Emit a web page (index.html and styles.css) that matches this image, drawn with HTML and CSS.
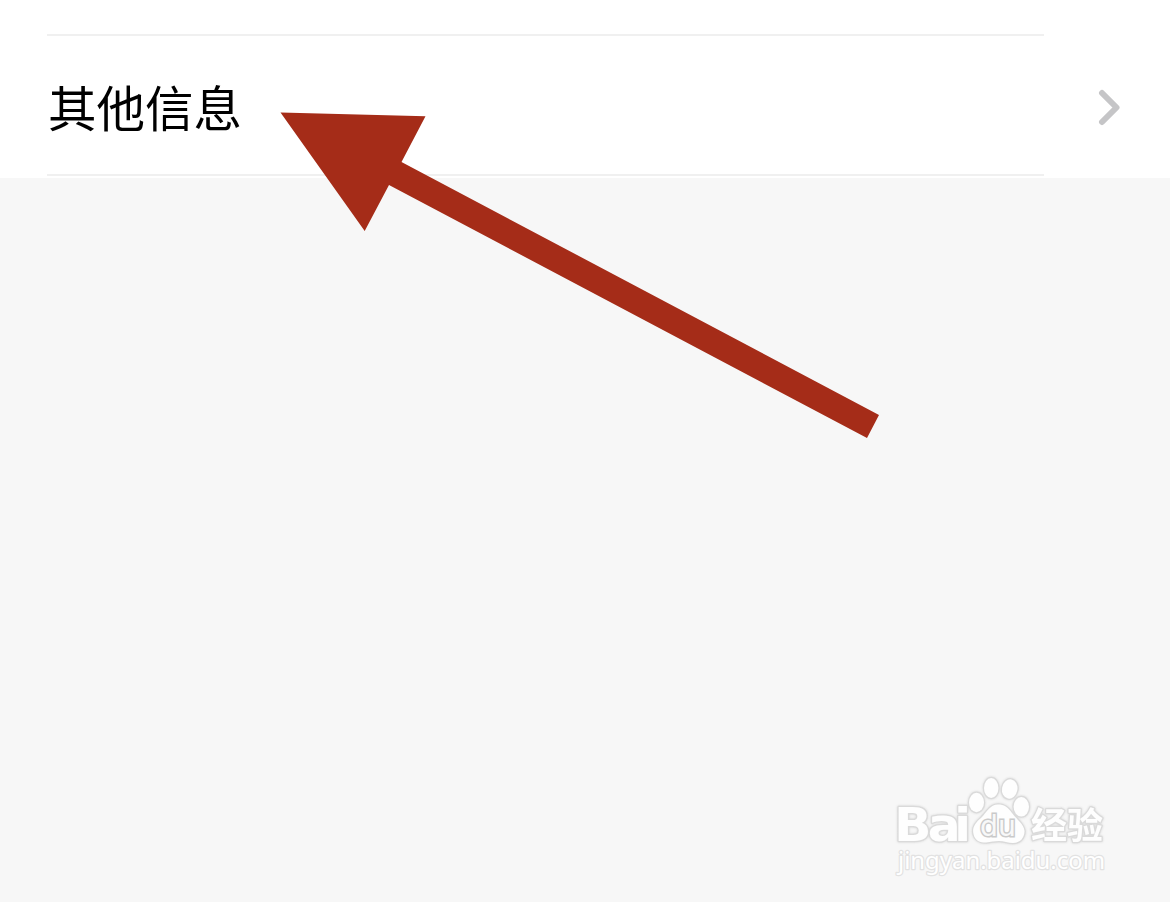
FILE: index.html
```html
<!DOCTYPE html>
<html lang="zh-CN">
<head>
<meta charset="utf-8">
<title>其他信息</title>
<link rel="stylesheet" href="styles.css">
</head>
<body>
<main class="screen">
  <section class="list">
    <div class="divider"></div>
    <div class="row">
      <span class="label">其他信息</span>
      <svg class="chevron" width="24" height="38" viewBox="0 0 24 38"><path d="M4 4L18.5 18.5L4 33"/></svg>
    </div>
    <div class="divider"></div>
  </section>
  <svg class="arrow" width="1170" height="902" viewBox="0 0 1170 902"><path d="M280.5 112.5L425.5 116.2L401.5 162L879 415L867 438L389 185L364.7 231Z"/></svg>
  <svg class="watermark" width="220" height="110" viewBox="890 770 220 110">
    <g class="mark">
      <text class="brand" transform="scale(1.06 1)" x="843.6 875.3 900.3" y="841">Bai</text>
      <ellipse cx="976.5" cy="802.5" rx="7.5" ry="9.7"/>
      <ellipse cx="991.2" cy="788" rx="7.2" ry="10"/>
      <ellipse cx="1009.7" cy="789" rx="7.7" ry="9.7" transform="rotate(10 1009.7 789)"/>
      <ellipse cx="1021.3" cy="806.8" rx="7.7" ry="9.7"/>
      <path d="M998 804.5C990 804.5 987 812 981 818C975 823 972 828 973.5 834C975 841 980 842.5 986 842.5C991 842 994 841 999 841C1004 841 1008 843 1013 843C1020 843 1024.5 838 1024.5 831C1024 824 1017 820 1012 813C1008 807 1004 804.5 998 804.5Z"/>
      <text class="cjk" x="1031" y="838.5" textLength="72" lengthAdjust="spacingAndGlyphs">经验</text>
    </g>
    <text class="du" x="980" y="836" textLength="36" lengthAdjust="spacingAndGlyphs">du</text>
    <text class="url" x="898" y="869" textLength="207" lengthAdjust="spacingAndGlyphs">jingyan.baidu.com</text>
  </svg>
</main>
</body>
</html>
```
FILE: styles.css
```css
body {
  margin: 0;
  background: #f7f7f7;
  font-family: "Noto Sans CJK SC", sans-serif;
}
.screen {
  position: relative;
  height: 902px;
  overflow: hidden;
}
.list {
  box-sizing: border-box;
  height: 178px;
  padding-top: 34px;
  background: #fff;
}
.divider {
  height: 2px;
  margin: 0 126px 0 47px;
  background: #f0f0f0;
}
.row {
  display: flex;
  box-sizing: border-box;
  height: 138px;
  align-items: center;
  justify-content: space-between;
  padding: 0 48px;
}
.label {
  padding-top: 2px;
  color: #000;
  font-size: 48.5px;
  line-height: 70px;
}
.chevron {
  margin-top: 5px;
}
.chevron path {
  fill: none;
  stroke: #c5c5c7;
  stroke-width: 6;
  stroke-linecap: round;
  stroke-linejoin: round;
}
.arrow {
  position: absolute;
  top: 0;
  left: 0;
  fill: #a52c18;
}
.watermark {
  position: absolute;
  top: 770px;
  left: 890px;
}
.mark {
  fill: #fefefe;
  stroke: #dadada;
  stroke-width: 2.5;
  stroke-linejoin: round;
  paint-order: stroke;
  filter: drop-shadow(0 0 0.8px #d6d6d6);
}
.brand {
  font: bold 46px "DejaVu Sans", sans-serif;
}
.cjk {
  font: bold 36px "Noto Sans CJK SC", sans-serif;
}
.du {
  font: 29px "DejaVu Sans", sans-serif;
  fill: #f8f8f8;
  stroke: #cacaca;
  stroke-width: 3;
  paint-order: stroke;
}
.url {
  font: 23.5px "Noto Sans", sans-serif;
  fill: #fff;
  stroke: #e2e2e2;
  stroke-width: 2.4;
  stroke-linejoin: round;
  paint-order: stroke;
}
```
